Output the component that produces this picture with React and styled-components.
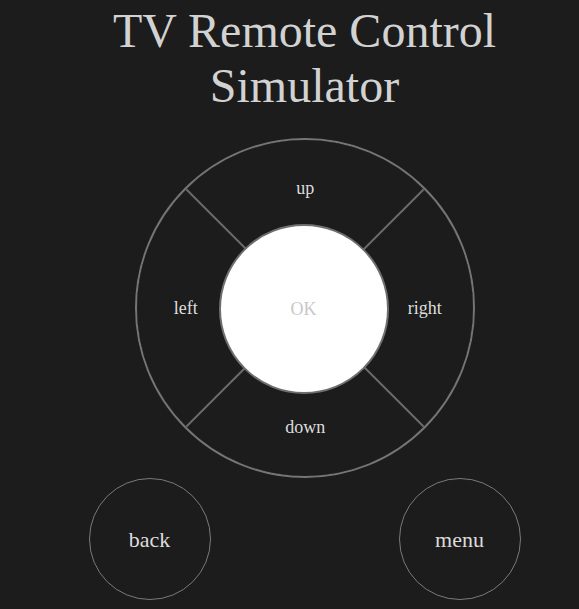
import React from "react";
import styled, { createGlobalStyle } from "styled-components";

const Global = createGlobalStyle`
  html, body {
    margin: 0;
    padding: 0;
    background: #1c1c1c;
    overflow: hidden;
  }
  body {
    font-family: "Liberation Serif", "Times New Roman", serif;
  }
`;

const Page = styled.main`
  width: 579px;
  height: 609px;
  box-sizing: border-box;
  padding: 3px 0 0 30px;
  display: flex;
  flex-direction: column;
  align-items: center;
`;

const Title = styled.h1`
  margin: 0;
  font-size: 48px;
  font-weight: normal;
  line-height: 55px;
  color: #d2d2d2;
  text-align: center;
  width: 420px;
`;

const Pad = styled.div`
  margin-top: 25px;
  width: 340px;
  height: 340px;
  box-sizing: border-box;
  border: 2px solid #757575;
  border-radius: 50%;
  overflow: hidden;
  position: relative;
  display: flex;
  align-items: center;
  justify-content: center;
  background: #1c1c1c;
`;

const Quadrants = styled.div`
  flex: none;
  width: 336px;
  height: 336px;
  display: grid;
  grid-template-columns: 1fr 1fr;
  grid-template-rows: 1fr 1fr;
  gap: 2px;
  background: #6a6a6a;
  transform: rotate(45deg);
`;

const Segment = styled.button`
  border: none;
  margin: 0;
  padding: 0;
  background: #1c1c1c;
  display: flex;
  align-items: center;
  justify-content: center;
  cursor: pointer;
`;

const SegmentLabel = styled.span`
  display: block;
  transform: rotate(-45deg);
  font-family: "Liberation Serif", "Times New Roman", serif;
  font-size: 18px;
  color: #dedede;
`;

const OkButton = styled.button`
  position: absolute;
  left: 50%;
  top: 50%;
  width: 170px;
  height: 170px;
  margin: -84px 0 0 -86px;
  box-sizing: border-box;
  border: 2px solid #6f6f6f;
  border-radius: 50%;
  background: #ffffff;
  font-family: "Liberation Serif", "Times New Roman", serif;
  font-size: 18px;
  color: #c8c8c8;
  padding: 0;
  cursor: pointer;
`;

const BottomRow = styled.div`
  width: 432px;
  display: flex;
  justify-content: space-between;
`;

const RoundButton = styled.button`
  width: 122px;
  height: 122px;
  box-sizing: border-box;
  border: 1px solid #7a7a7a;
  border-radius: 50%;
  background: transparent;
  font-family: "Liberation Serif", "Times New Roman", serif;
  font-size: 22px;
  color: #dcdcdc;
  padding: 2px 0 0;
  cursor: pointer;
`;

const segments = [
  { key: "up", label: "up" },
  { key: "right", label: "right" },
  { key: "left", label: "left" },
  { key: "down", label: "down" },
];

export default function App() {
  return (
    <>
      <Global />
      <Page>
        <Title>TV Remote Control Simulator</Title>
        <Pad>
          <Quadrants>
            {segments.map((s) => (
              <Segment key={s.key} aria-label={s.label}>
                <SegmentLabel>{s.label}</SegmentLabel>
              </Segment>
            ))}
          </Quadrants>
          <OkButton>OK</OkButton>
        </Pad>
        <BottomRow>
          <RoundButton>back</RoundButton>
          <RoundButton>menu</RoundButton>
        </BottomRow>
      </Page>
    </>
  );
}
